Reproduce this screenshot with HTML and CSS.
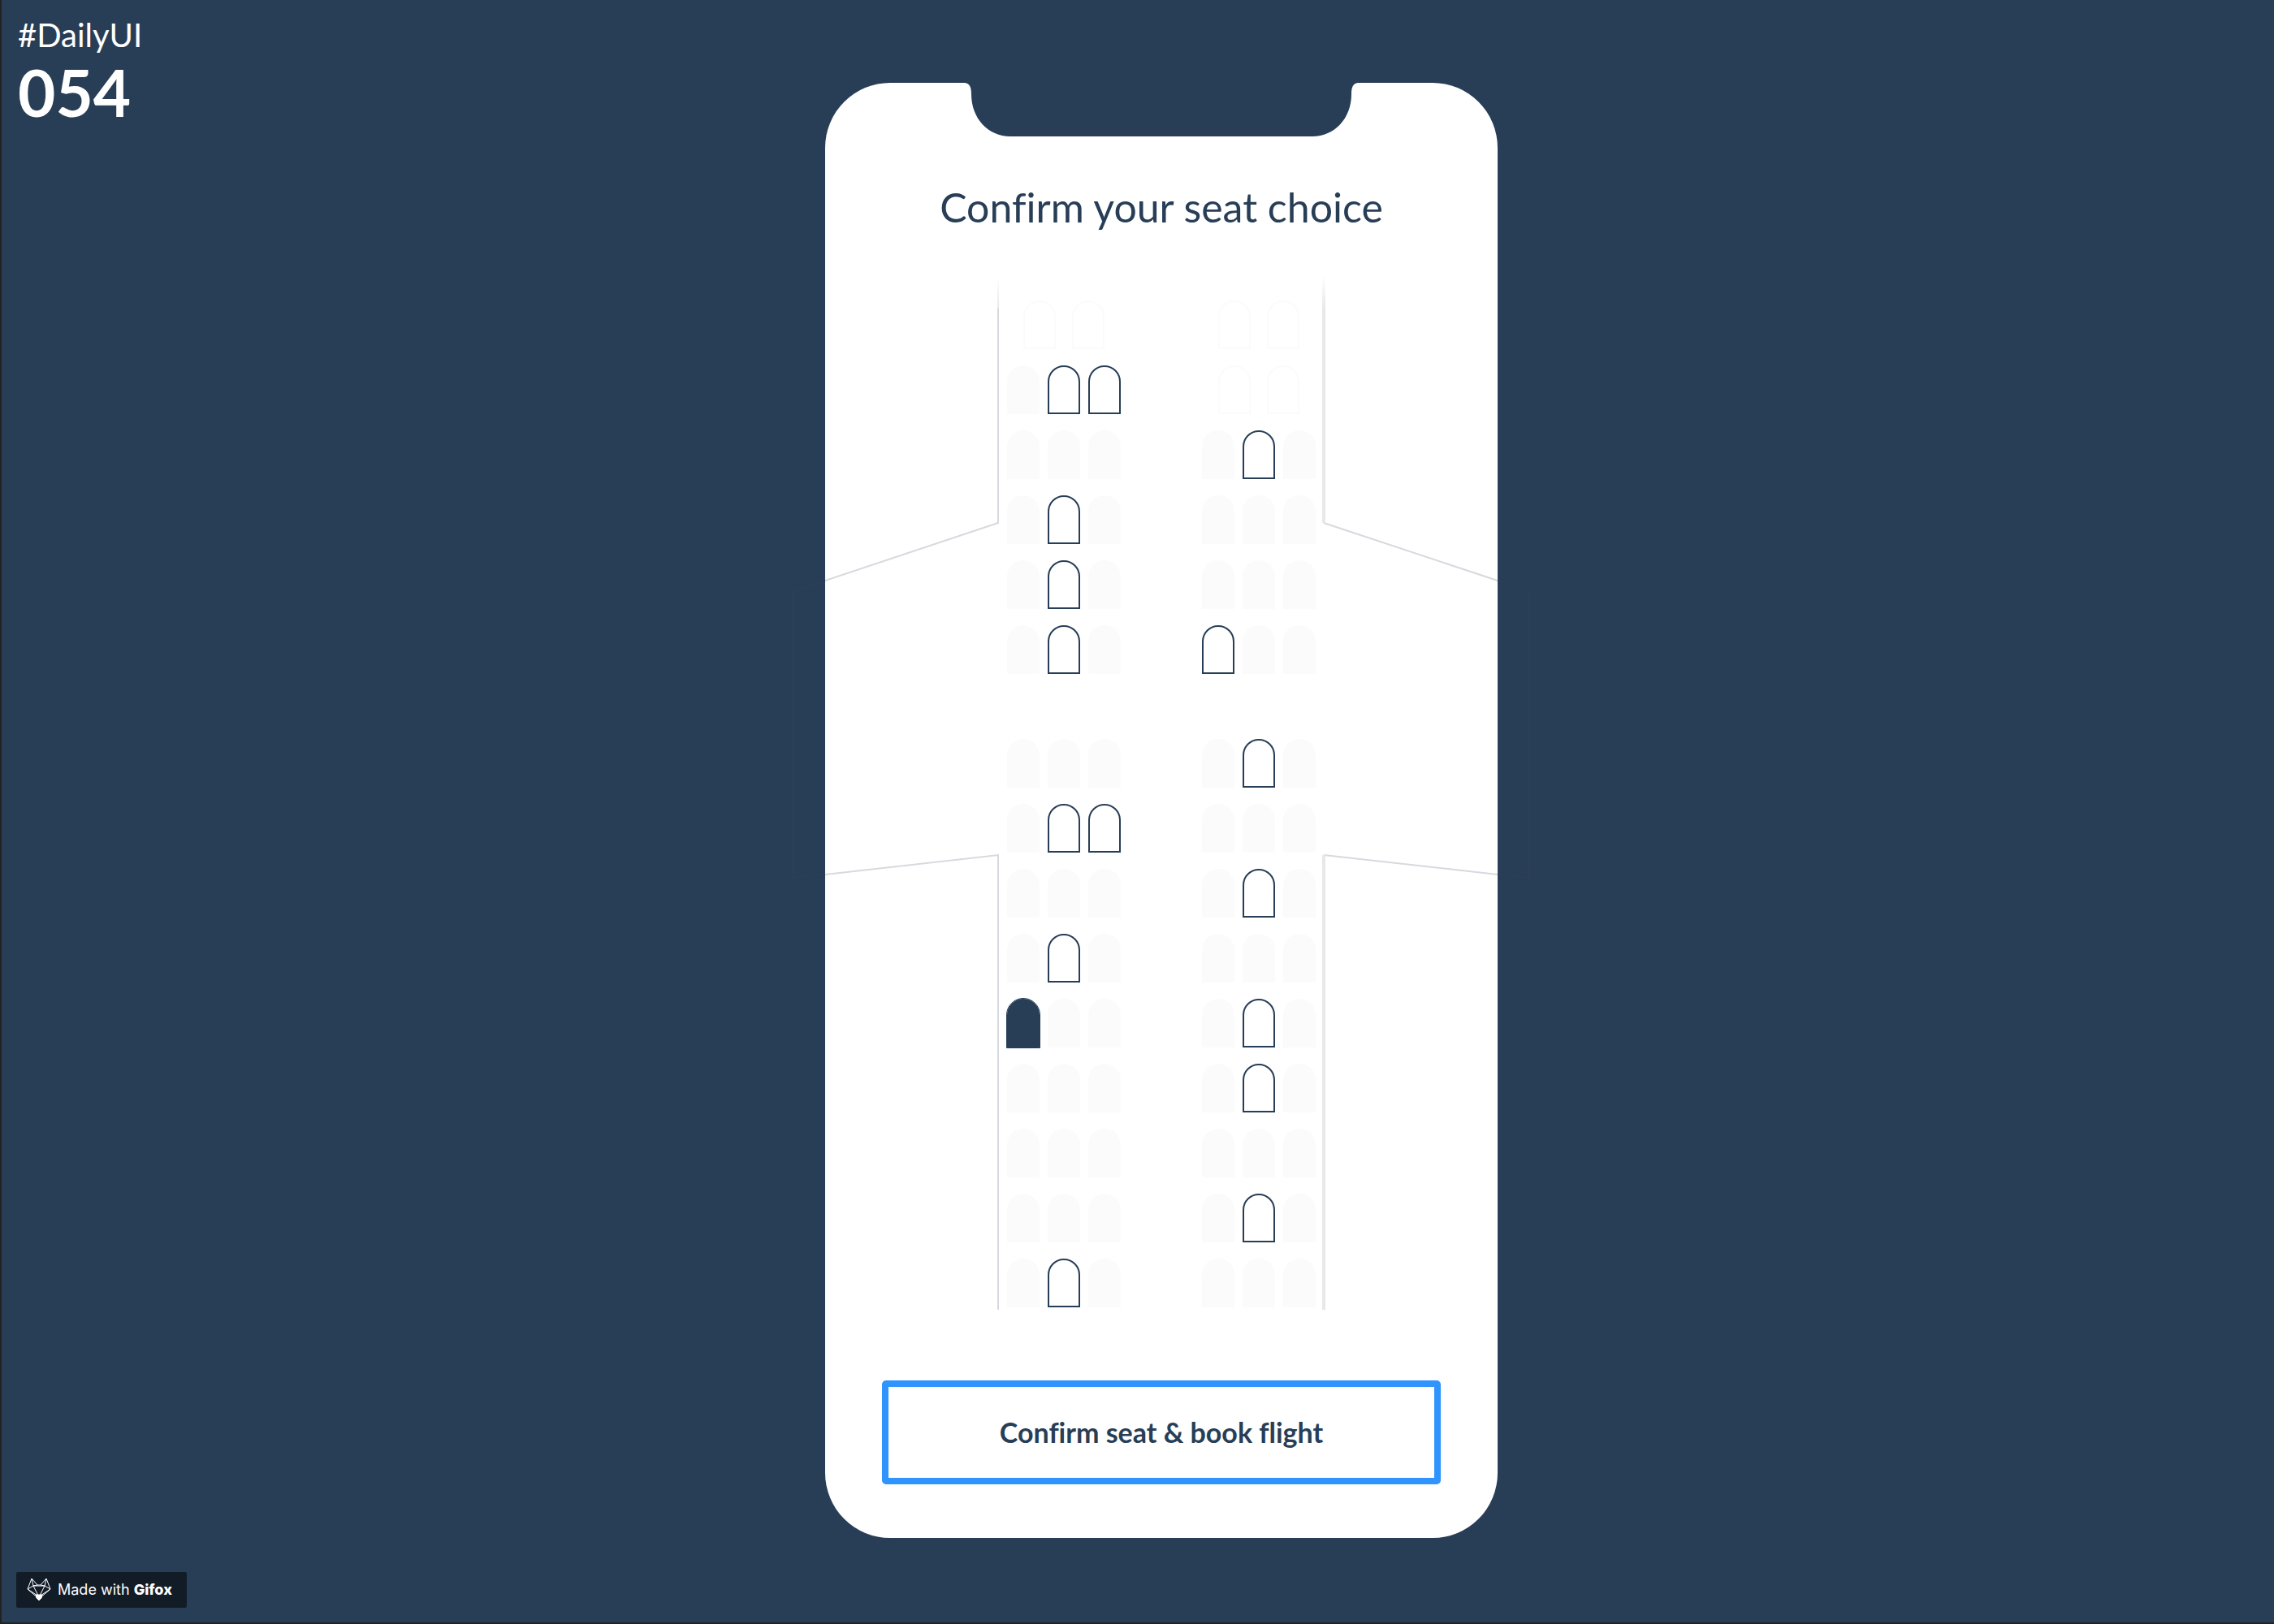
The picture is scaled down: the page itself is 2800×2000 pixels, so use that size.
FILE: index.html
```html
<!DOCTYPE html>
<html lang="en">
<head>
<meta charset="utf-8">
<meta name="viewport" content="width=device-width, initial-scale=1">
<title>Confirm your seat choice</title>
<link rel="stylesheet" href="styles.css">
</head>
<body>
<div class="stage">
  <header class="challenge">
    <p class="challenge-tag">#DailyUI</p>
    <p class="challenge-number">054</p>
  </header>

  <main class="phone">
    <svg class="notch" viewBox="0 0 484 66" aria-hidden="true">
      <path d="M0 0C6 1 8 5 8 14C8 44 29 66 56 66H428C455 66 476 44 476 14C476 5 478 1 484 0Z"/>
    </svg>
    <h1 class="title">Confirm your seat choice</h1>
    <div class="cabin">
      <svg class="plane" viewBox="0 0 828 1274" aria-hidden="true">
        <defs>
          <linearGradient id="fade" x1="0" y1="0" x2="0" y2="1">
            <stop offset="0" stop-color="#d6d9de" stop-opacity="0"/>
            <stop offset="1" stop-color="#d6d9de" stop-opacity=".6"/>
          </linearGradient>
        </defs>
        <rect x="212" y="0" width="2" height="40" fill="url(#fade)"/>
        <rect x="612" y="0" width="4" height="40" fill="url(#fade)"/>
        <path class="line" d="M213 40V304L0 375M0 737L213 713V1273"/>
        <path class="line" d="M614 304L828 375M828 737L614 713"/>
        <path class="line line-wide" d="M614 40V304M614 713V1273"/>
        <path class="line wing-tip" d="M0 375L-39 388V741L0 737M828 375L867 388V741L828 737"/>
      </svg>
      <form class="seats" id="seats"></form>
    </div>
    <button class="confirm" type="submit" form="seats">Confirm seat &amp; book flight</button>
  </main>

  <a class="badge" href="#gifox">
    <svg class="fox" viewBox="0 0 30 28" aria-hidden="true">
      <path d="M6 1L1 14L15 26L29 14L24 1L17 9H13ZM6 1L8 10L15 24L22 10L24 1M1 14L8 10L13 9M29 14L22 10L17 9M8 10H22M1 14L13 22M29 14L17 22"/>
      <path class="nose" d="M11 21H19L18 25L15 28L12 25Z"/>
    </svg>
    <span>Made with <b>Gifox</b></span>
  </a>
</div>
<script src="seats.js"></script>
</body>
</html>
```

FILE: styles.css
```css
* {
  box-sizing: border-box;
}

body {
  margin: 0;
  background: #283e57;
  color: #283e57;
  font-family: Lato, "Liberation Sans", sans-serif;
}

.stage {
  display: grid;
  grid-template-columns: 1fr auto 1fr;
  grid-template-rows: 1fr auto;
  min-height: 100vh;
  padding: 20px 0 18px 18px;
  border-left: 2px solid #222;
  border-bottom: 2px solid #222;
}

.challenge {
  color: #fff;
}

.challenge-tag,
.challenge-number {
  margin: 0;
  padding-left: 2px;
}

.challenge-tag {
  font-size: 40px;
  line-height: 46px;
}

.challenge-number {
  font-size: 80px;
  font-weight: 700;
  line-height: 94px;
}

.phone {
  grid-column: 2;
  grid-row: 1 / 3;
  display: flex;
  flex-direction: column;
  align-items: center;
  width: 828px;
  max-width: 100%;
  margin: 82px 40px 86px 80px;
  padding-bottom: 66px;
  border-radius: 80px;
  background: #fff;
}

.notch {
  width: 484px;
  height: 66px;
  fill: #283e57;
}

.title {
  margin: 57px 0 0;
  font-size: 50px;
  font-weight: 400;
  font-variant-ligatures: none;
  line-height: 60px;
}

.cabin {
  position: relative;
  align-self: stretch;
  margin-top: 55px;
  padding: 30px 0 4px;
}

.plane {
  position: absolute;
  inset: 0;
  width: 100%;
  height: 100%;
  overflow: visible;
}

.line {
  fill: none;
  stroke: #d6d9de;
  stroke-width: 2;
}

.line-wide {
  stroke: #e6e8ea;
  stroke-width: 4;
}

.wing-tip {
  stroke: #2c3e5a;
}

.seats {
  position: relative;
  display: flex;
  flex-direction: column;
  align-items: center;
  gap: 20px;
}

.row {
  display: flex;
  gap: 100px;
}

.row-exit {
  margin-top: 60px;
}

.block {
  display: flex;
  justify-content: center;
  gap: 10px;
  width: 140px;
}

.block-pair {
  gap: 20px;
}

.seat {
  appearance: none;
  width: 40px;
  height: 60px;
  margin: 0;
  border: 0 solid #283e57;
  border-radius: 20px 20px 0 0;
  background: #fbfbfb;
}

.seat-free {
  border-width: 2px;
  background: #fff;
}

.seat-free:checked {
  background: #283e57;
  outline: 1px solid #283e57;
}

.seat-faint {
  border: 2px solid #fbfbfb;
  background: #fff;
}

.confirm {
  width: 688px;
  max-width: 100%;
  height: 128px;
  margin-top: 86px;
  border: 8px solid #3094ff;
  border-radius: 5px;
  background: #fff;
  color: #283e57;
  font: 700 34px/40px Lato, "Liberation Sans", sans-serif;
  font-variant-ligatures: none;
}

.badge {
  grid-column: 1;
  grid-row: 2;
  justify-self: start;
  display: flex;
  align-items: center;
  gap: 8px;
  width: 210px;
  height: 44px;
  padding: 0 0 2px 13px;
  border-radius: 2px;
  background: #121c27;
  color: #fff;
  font-family: Inter, sans-serif;
  font-size: 18px;
  text-decoration: none;
  white-space: nowrap;
}

.badge b {
  font-weight: 800;
}

.fox {
  width: 30px;
  height: 28px;
  fill: none;
  stroke: #fff;
}

.nose {
  fill: #fff;
}
```

FILE: seats.js
```js
// One entry per row, left block then right block.
// x: taken, o: free, s: free and chosen, f: faint pair near the nose, E: exit row gap before
const rows = [
  ["ff", "ff"],
  ["xoo", "ff"],
  ["xxx", "xox"],
  ["xox", "xxx"],
  ["xox", "xxx"],
  ["xox", "oxx"],
  ["xxx", "xox", "E"],
  ["xoo", "xxx"],
  ["xxx", "xox"],
  ["xox", "xxx"],
  ["sxx", "xox"],
  ["xxx", "xox"],
  ["xxx", "xxx"],
  ["xxx", "xox"],
  ["xox", "xxx"],
];

const form = document.getElementById("seats");

rows.forEach(([left, right, exit], index) => {
  const row = document.createElement("div");
  row.className = exit ? "row row-exit" : "row";
  [left, right].forEach((codes, side) => {
    const block = document.createElement("div");
    block.className = codes === "ff" ? "block block-pair" : "block";
    [...codes].forEach((code, place) => {
      const seat = document.createElement("input");
      const free = code === "o" || code === "s";
      seat.type = "radio";
      seat.name = "seat";
      seat.value = `${index + 1}${"ABCDEF"[side * 3 + place]}`;
      seat.setAttribute("aria-label", `Seat ${seat.value}`);
      seat.className = "seat";
      if (free) seat.classList.add("seat-free");
      if (code === "f") seat.classList.add("seat-faint");
      seat.disabled = !free;
      seat.checked = code === "s";
      block.append(seat);
    });
    row.append(block);
  });
  form.append(row);
});
```
